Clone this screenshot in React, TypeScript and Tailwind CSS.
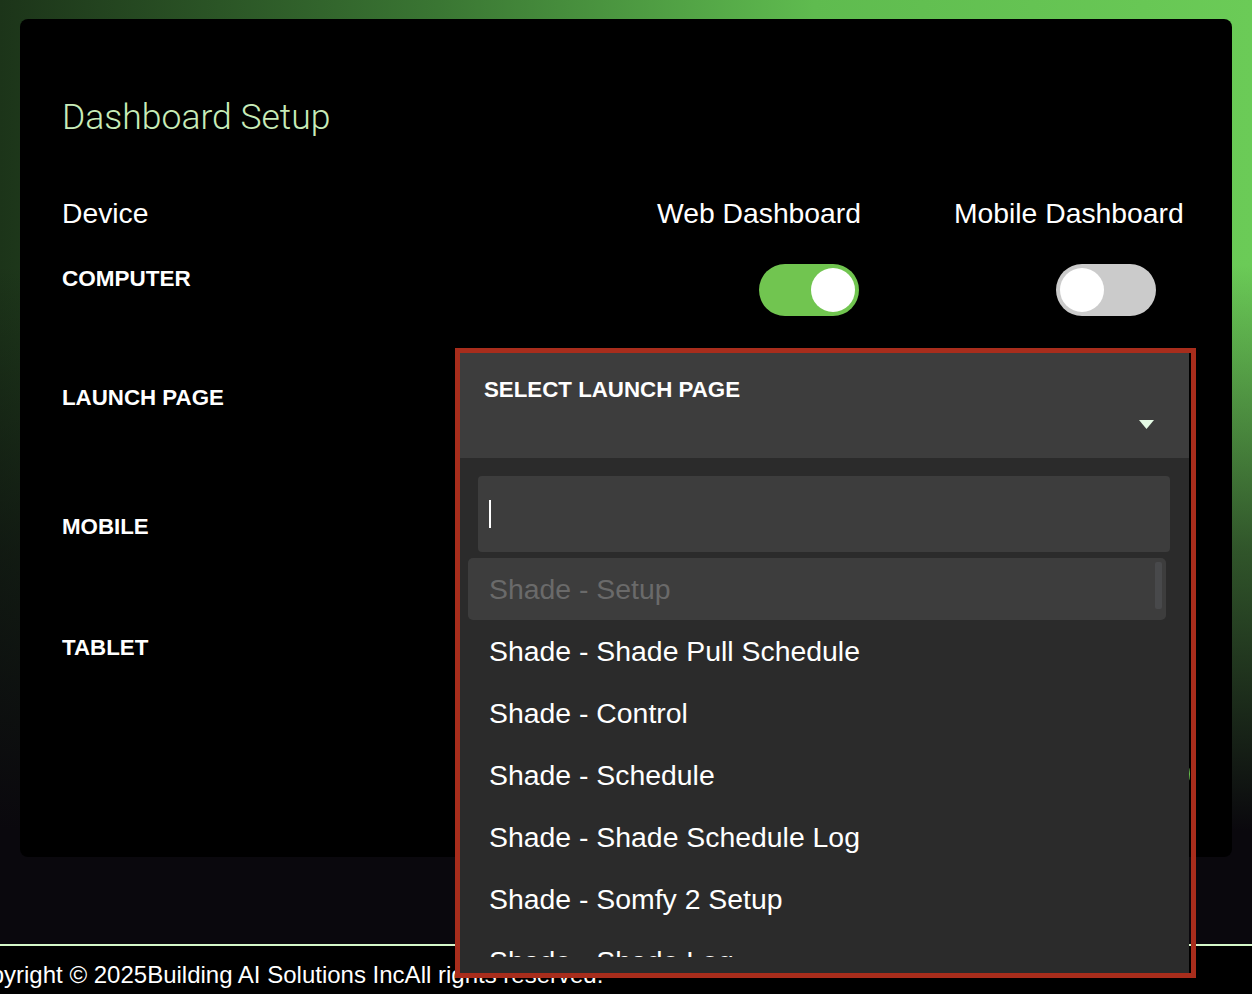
import { useState } from 'react'

const pages = [
  'Shade - Setup',
  'Shade - Shade Pull Schedule',
  'Shade - Control',
  'Shade - Schedule',
  'Shade - Shade Schedule Log',
  'Shade - Somfy 2 Setup',
  'Shade - Shade Log',
]

function Toggle({ on }: { on: boolean }) {
  return (
    <div
      className={
        on
          ? 'w-[100px] h-[52px] rounded-full bg-[#71c550] flex items-center justify-end pr-[4px]'
          : 'w-[100px] h-[52px] rounded-full bg-[#cbcbcb] flex items-center justify-start pl-[4px]'
      }
    >
      <div className="w-[44px] h-[44px] rounded-full bg-white" />
    </div>
  )
}

export default function App() {
  const [query] = useState('')

  return (
    <div className="min-h-[994px] flex flex-col bg-black font-['Liberation_Sans',Arial,sans-serif] text-white">
      <main className="h-[944px] pt-[19px] px-[20px] bg-[linear-gradient(to_bottom,rgba(10,8,13,0)_28%,rgba(10,8,13,0.6)_58%,#0a080d_88%),linear-gradient(to_right,#1c3419_0%,#3a7633_35%,#5fbb4f_65%,#6bcb57_100%)]">
        <div className="relative h-[838px] rounded-lg bg-black pl-[42px] pr-[46px] pt-[80px] flex flex-col">
          <h1 className="text-[35.5px] leading-[36px] h-[36px] font-light font-['Roboto',sans-serif] text-[#c8ecb9] whitespace-nowrap">
            Dashboard Setup
          </h1>

          {/* column headings */}
          <div className="mt-[64px] h-[28px] flex text-[28.3px] leading-[28px] whitespace-nowrap">
            <div className="flex-1">Device</div>
            <div className="w-[206px] text-right pr-[1px]">Web Dashboard</div>
            <div className="w-[232px] ml-[92px]">Mobile Dashboard</div>
          </div>

          <div className="mt-[37px] h-[52px] flex">
            <div className="flex-1 mt-[4px] text-[22.5px] leading-[22px] font-bold">COMPUTER</div>
            <div className="w-[206px] flex justify-end pr-[3px]">
              <Toggle on />
            </div>
            <div className="w-[232px] ml-[92px] pl-[102px]">
              <Toggle on={false} />
            </div>
          </div>

          <div className="mt-[37px] h-[105px] flex">
            <div className="flex-1 mt-[34px] text-[22.3px] leading-[22px] font-bold">LAUNCH PAGE</div>
            <div className="relative w-[730px] -mr-[3px]">
              <div className="h-[105px] bg-[#3d3d3d] pt-[26px] pl-[25px]">
                <div className="text-[22.3px] leading-[22px] font-bold">SELECT LAUNCH PAGE</div>
                <div className="mt-[19px] flex justify-end pr-[35px]">
                  <svg width="15" height="9" viewBox="0 0 15 9">
                    <path d="M0 0h15L7.5 9z" fill="#e6fbe6" />
                  </svg>
                </div>
              </div>

              <div className="absolute left-0 top-full z-10 w-[730px] h-[515px] bg-[#2b2b2b] pt-[18px]">
                <div className="ml-[19px] w-[692px] h-[76px] rounded-[4px] bg-[#3d3d3d] flex items-center pl-[11px]">
                  <div className="w-[2px] h-[28px] bg-white" />
                  <span className="sr-only">{query}</span>
                </div>
                <div className="relative ml-[9px] mt-[6px] w-[698px] h-[399px] overflow-hidden">
                  {pages.map((p, i) => (
                    <div
                      key={p}
                      className={
                        i === 0
                          ? 'h-[62px] flex items-center pl-[21px] rounded-[5px] bg-[#3d3d3d] text-[#6a6a6a] text-[28.4px] whitespace-nowrap'
                          : 'h-[62px] flex items-center pl-[21px] text-white text-[28.4px] whitespace-nowrap'
                      }
                    >
                      {p}
                    </div>
                  ))}
                  <div className="absolute right-[4px] top-[4px] w-[7px] h-[47px] rounded-[2px] bg-[#48494b]" />
                </div>
              </div>

              <div className="pointer-events-none absolute -left-[4px] -top-[5px] z-20 w-[741px] h-[630px] border-[5px] border-[#a82d1c]" />
            </div>
          </div>

          <div className="mt-[58px] h-[22px] text-[22.3px] leading-[22px] font-bold">MOBILE</div>
          <div className="mt-[99px] h-[22px] text-[22.3px] leading-[22px] font-bold">TABLET</div>

          <div className="mt-[91px] flex justify-end -mr-[4px]">
            <button className="h-[48px] w-[150px] rounded-full bg-[#6cc551] text-[20px] font-bold">SAVE</button>
          </div>
        </div>
      </main>

      <footer className="h-[50px] border-t-2 border-[#d5f7c8] bg-black pt-[17px] overflow-hidden">
        <p className="-ml-[40px] text-[24px] leading-[24px] text-white whitespace-nowrap">
          Copyright © 2025Building AI Solutions IncAll rights reserved.
        </p>
      </footer>
    </div>
  )
}
